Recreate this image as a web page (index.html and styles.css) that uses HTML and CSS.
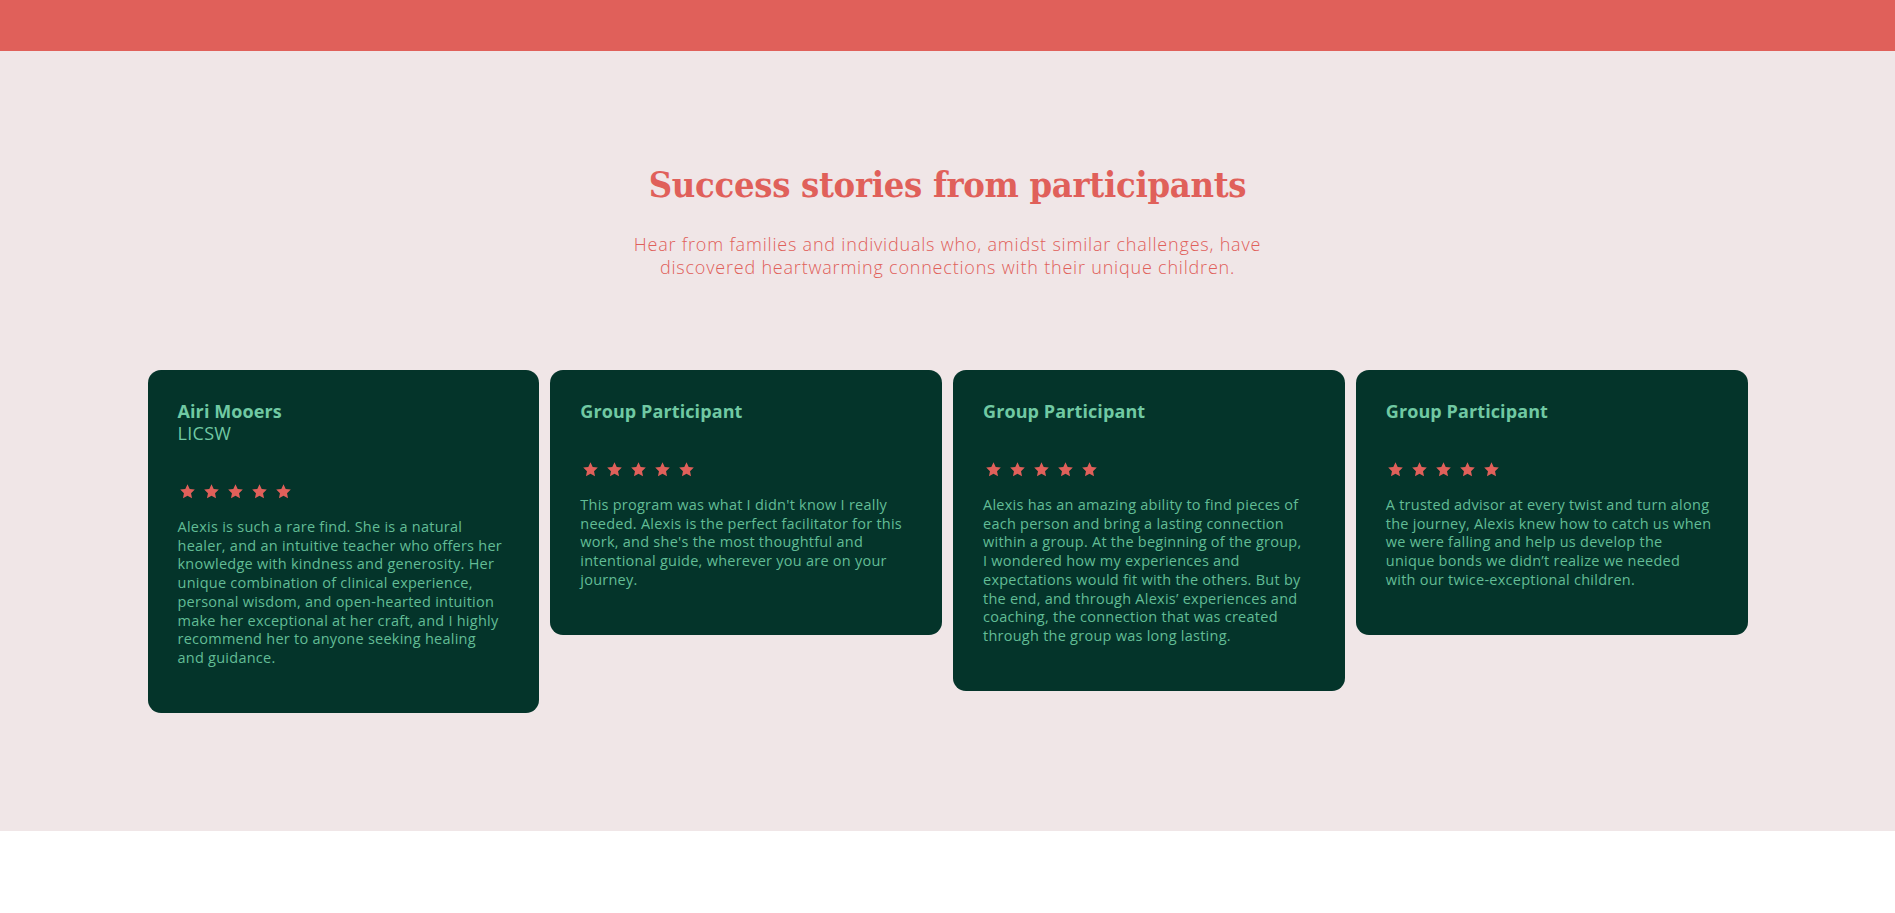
FILE: index.html
```html
<!DOCTYPE html>
<html lang="en">
<head>
<meta charset="utf-8">
<title>Success stories</title>
<link rel="stylesheet" href="styles.css">
</head>
<body>
<header class="topbar"></header>
<section class="stories">
  <h1 class="stories-title">Success stories from participants</h1>
  <p class="stories-sub">Hear from families and individuals who, amidst similar challenges, have discovered heartwarming connections with their unique children.</p>
  <div class="cards">
    <article class="card">
      <h3 class="card-name">Airi Mooers</h3>
      <div class="card-role">LICSW</div>
      <div class="stars">
        <svg viewBox="0 0 24 24"><path d="M12 1.8l3.1 6.6 7.2.9-5.3 5 1.4 7.1L12 17.9l-6.4 3.5 1.4-7.1-5.3-5 7.2-.9z"/></svg>
        <svg viewBox="0 0 24 24"><path d="M12 1.8l3.1 6.6 7.2.9-5.3 5 1.4 7.1L12 17.9l-6.4 3.5 1.4-7.1-5.3-5 7.2-.9z"/></svg>
        <svg viewBox="0 0 24 24"><path d="M12 1.8l3.1 6.6 7.2.9-5.3 5 1.4 7.1L12 17.9l-6.4 3.5 1.4-7.1-5.3-5 7.2-.9z"/></svg>
        <svg viewBox="0 0 24 24"><path d="M12 1.8l3.1 6.6 7.2.9-5.3 5 1.4 7.1L12 17.9l-6.4 3.5 1.4-7.1-5.3-5 7.2-.9z"/></svg>
        <svg viewBox="0 0 24 24"><path d="M12 1.8l3.1 6.6 7.2.9-5.3 5 1.4 7.1L12 17.9l-6.4 3.5 1.4-7.1-5.3-5 7.2-.9z"/></svg>
      </div>
      <p class="card-text">Alexis is such a rare find. She is a natural healer, and an intuitive teacher who offers her knowledge with kindness and generosity. Her unique combination of clinical experience, personal wisdom, and open-hearted intuition make her exceptional at her craft, and I highly recommend her to anyone seeking healing and guidance.</p>
    </article>
    <article class="card">
      <h3 class="card-name">Group Participant</h3>
      <div class="stars">
        <svg viewBox="0 0 24 24"><path d="M12 1.8l3.1 6.6 7.2.9-5.3 5 1.4 7.1L12 17.9l-6.4 3.5 1.4-7.1-5.3-5 7.2-.9z"/></svg>
        <svg viewBox="0 0 24 24"><path d="M12 1.8l3.1 6.6 7.2.9-5.3 5 1.4 7.1L12 17.9l-6.4 3.5 1.4-7.1-5.3-5 7.2-.9z"/></svg>
        <svg viewBox="0 0 24 24"><path d="M12 1.8l3.1 6.6 7.2.9-5.3 5 1.4 7.1L12 17.9l-6.4 3.5 1.4-7.1-5.3-5 7.2-.9z"/></svg>
        <svg viewBox="0 0 24 24"><path d="M12 1.8l3.1 6.6 7.2.9-5.3 5 1.4 7.1L12 17.9l-6.4 3.5 1.4-7.1-5.3-5 7.2-.9z"/></svg>
        <svg viewBox="0 0 24 24"><path d="M12 1.8l3.1 6.6 7.2.9-5.3 5 1.4 7.1L12 17.9l-6.4 3.5 1.4-7.1-5.3-5 7.2-.9z"/></svg>
      </div>
      <p class="card-text">This program was what I didn't know I really needed. Alexis is the perfect facilitator for this work, and she's the most thoughtful and intentional guide, wherever you are on your journey.</p>
    </article>
    <article class="card">
      <h3 class="card-name">Group Participant</h3>
      <div class="stars">
        <svg viewBox="0 0 24 24"><path d="M12 1.8l3.1 6.6 7.2.9-5.3 5 1.4 7.1L12 17.9l-6.4 3.5 1.4-7.1-5.3-5 7.2-.9z"/></svg>
        <svg viewBox="0 0 24 24"><path d="M12 1.8l3.1 6.6 7.2.9-5.3 5 1.4 7.1L12 17.9l-6.4 3.5 1.4-7.1-5.3-5 7.2-.9z"/></svg>
        <svg viewBox="0 0 24 24"><path d="M12 1.8l3.1 6.6 7.2.9-5.3 5 1.4 7.1L12 17.9l-6.4 3.5 1.4-7.1-5.3-5 7.2-.9z"/></svg>
        <svg viewBox="0 0 24 24"><path d="M12 1.8l3.1 6.6 7.2.9-5.3 5 1.4 7.1L12 17.9l-6.4 3.5 1.4-7.1-5.3-5 7.2-.9z"/></svg>
        <svg viewBox="0 0 24 24"><path d="M12 1.8l3.1 6.6 7.2.9-5.3 5 1.4 7.1L12 17.9l-6.4 3.5 1.4-7.1-5.3-5 7.2-.9z"/></svg>
      </div>
      <p class="card-text">Alexis has an amazing ability to find pieces of each person and bring a lasting connection within a group. At the beginning of the group, I wondered how my experiences and expectations would fit with the others. But by the end, and through Alexis’ experiences and coaching, the connection that was created through the group was long lasting.</p>
    </article>
    <article class="card">
      <h3 class="card-name">Group Participant</h3>
      <div class="stars">
        <svg viewBox="0 0 24 24"><path d="M12 1.8l3.1 6.6 7.2.9-5.3 5 1.4 7.1L12 17.9l-6.4 3.5 1.4-7.1-5.3-5 7.2-.9z"/></svg>
        <svg viewBox="0 0 24 24"><path d="M12 1.8l3.1 6.6 7.2.9-5.3 5 1.4 7.1L12 17.9l-6.4 3.5 1.4-7.1-5.3-5 7.2-.9z"/></svg>
        <svg viewBox="0 0 24 24"><path d="M12 1.8l3.1 6.6 7.2.9-5.3 5 1.4 7.1L12 17.9l-6.4 3.5 1.4-7.1-5.3-5 7.2-.9z"/></svg>
        <svg viewBox="0 0 24 24"><path d="M12 1.8l3.1 6.6 7.2.9-5.3 5 1.4 7.1L12 17.9l-6.4 3.5 1.4-7.1-5.3-5 7.2-.9z"/></svg>
        <svg viewBox="0 0 24 24"><path d="M12 1.8l3.1 6.6 7.2.9-5.3 5 1.4 7.1L12 17.9l-6.4 3.5 1.4-7.1-5.3-5 7.2-.9z"/></svg>
      </div>
      <p class="card-text">A trusted advisor at every twist and turn along the journey, Alexis knew how to catch us when we were falling and help us develop the unique bonds we didn’t realize we needed with our twice-exceptional children.</p>
    </article>
  </div>
</section>
</body>
</html>
```

FILE: styles.css
```css
* { box-sizing: border-box; }
html, body { margin: 0; padding: 0; background: #ffffff; }
body { font-family: "Open Sans", "Noto Sans", sans-serif; }

.topbar { height: 51px; background: #e0605a; }

.stories {
  background: #f0e6e7;
  height: 780px;
  padding-top: 109px;
  display: flex;
  flex-direction: column;
  align-items: center;
}

.stories-title {
  margin: 0;
  font-family: "DejaVu Serif Condensed", "DejaVu Serif", "Liberation Serif", serif;
  font-stretch: condensed;
  font-weight: 700;
  font-size: 36px;
  line-height: 48px;
  letter-spacing: -0.3px;
  color: #e0605a;
  text-align: center;
}

.stories-sub {
  margin: 25px 0 0;
  width: 660px;
  font-family: "Open Sans", sans-serif;
  font-weight: 300;
  font-size: 18px;
  line-height: 23px;
  letter-spacing: 0.8px;
  color: #e0605a;
  text-align: center;
}

.cards {
  margin-top: 91px;
  width: 1600px;
  display: grid;
  grid-template-columns: repeat(4, 1fr);
  gap: 11px;
  align-items: start;
}

.card {
  background: #04342a;
  border-radius: 13px;
  padding: 30px 36px 45px 30px;
}

.card-name {
  margin: 0;
  font-family: "Open Sans", sans-serif;
  font-weight: 700;
  font-size: 18px;
  line-height: 22px;
  letter-spacing: 0.1px;
  color: #70c9a3;
}

.card-role {
  font-weight: 400;
  font-size: 18px;
  line-height: 22px;
  letter-spacing: 0.3px;
  color: #70c9a3;
}

.stars {
  display: flex;
  gap: 7px;
  margin-top: 39px;
  padding-left: 1.5px;
}
.stars svg { width: 17px; height: 17px; fill: #e0605a; }

.card-text {
  margin: 18px 0 0;
  font-size: 14.5px;
  line-height: 18.7px;
  letter-spacing: 0.25px;
  color: #62bd96;
}
```
